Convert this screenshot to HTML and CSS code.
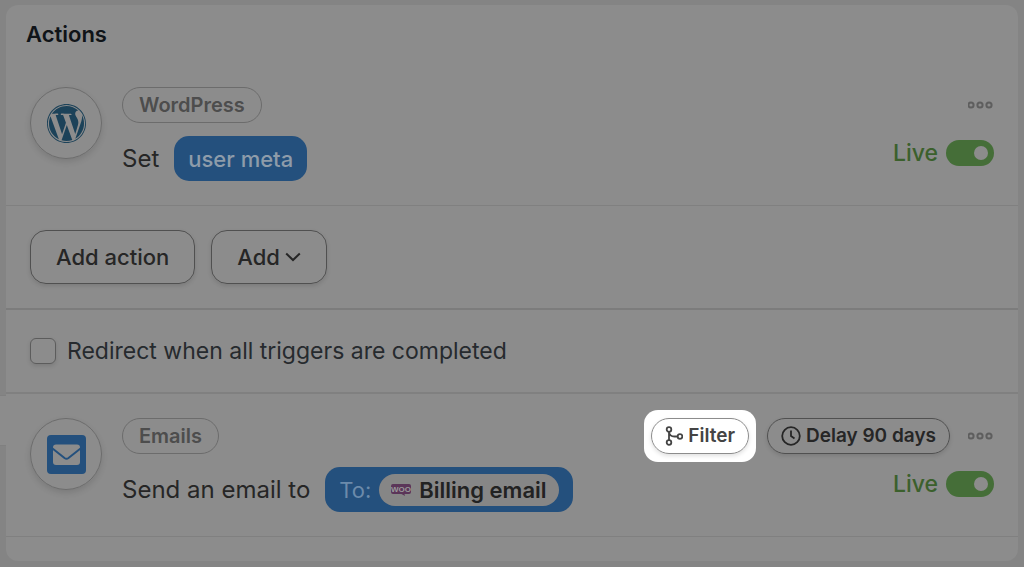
FILE: index.html
```html
<!DOCTYPE html>
<html lang="en">
<head>
<meta charset="utf-8">
<title>Actions</title>
<link rel="stylesheet" href="styles.css">
</head>
<body>
<main class="card">
  <h1 class="card-title">Actions</h1>

  <section class="action">
    <span class="badge">
      <svg class="badge-icon wordpress" viewBox="0 0 24 24" aria-hidden="true"><path d="M21.469 6.825c.84 1.537 1.318 3.3 1.318 5.175 0 3.979-2.156 7.456-5.363 9.325l3.295-9.527c.615-1.54.82-2.771.82-3.864 0-.405-.026-.78-.07-1.11m-7.981.105c.647-.03 1.232-.105 1.232-.105.582-.075.514-.93-.067-.899 0 0-1.755.135-2.88.135-1.064 0-2.85-.15-2.85-.15-.585-.03-.661.855-.075.885 0 0 .54.061 1.125.09l1.68 4.605-2.37 7.08L5.354 6.9c.649-.03 1.234-.1 1.234-.1.585-.075.516-.93-.065-.896 0 0-1.746.138-2.874.138-.2 0-.438-.008-.69-.015C4.911 3.15 8.235 1.215 12 1.215c2.809 0 5.365 1.072 7.286 2.833-.046-.003-.091-.009-.141-.009-1.06 0-1.812.923-1.812 1.914 0 .89.513 1.643 1.06 2.531.411.72.89 1.643.89 2.977 0 .915-.354 1.994-.821 3.479l-1.075 3.585-3.9-11.61.001.014zM12 22.784c-1.059 0-2.081-.153-3.048-.437l3.237-9.406 3.315 9.087c.024.053.05.101.078.149-1.12.393-2.325.609-3.582.609M1.211 12c0-1.564.336-3.05.935-4.39L7.29 21.709C3.694 19.96 1.212 16.271 1.211 12M12 0C5.385 0 0 5.385 0 12s5.385 12 12 12 12-5.385 12-12S18.615 0 12 0m0 23.459C5.692 23.459.541 18.308.541 12 .541 5.691 5.692.54 12 .54c6.309 0 11.46 5.151 11.46 11.46 0 6.308-5.151 11.459-11.46 11.459"/></svg>
    </span>
    <div class="details">
      <span class="source">WordPress</span>
      <div class="sentence">Set <button class="token" type="button">user meta</button></div>
    </div>
    <div class="controls">
      <div class="tools">
        <button class="more" type="button" aria-label="More options"><svg viewBox="1 0 26 8" aria-hidden="true"><circle cx="4" cy="4" r="2.6"/><circle cx="13" cy="4" r="2.6"/><circle cx="22" cy="4" r="2.6"/></svg></button>
      </div>
      <label class="live">Live <input class="switch" type="checkbox" role="switch" checked></label>
    </div>
  </section>

  <div class="buttons">
    <button class="button" type="button">Add action</button>
    <button class="button" type="button">Add <svg class="chevron" viewBox="0 0 16 10" aria-hidden="true"><path d="M1.2 1.500 8 8l6.800-6.500"/></svg></button>
  </div>

  <label class="redirect"><input class="check" type="checkbox">Redirect when all triggers are completed</label>

  <section class="action joined">
    <span class="badge">
      <svg class="badge-icon" viewBox="0 0 39 39" aria-hidden="true"><rect class="mail-box" width="39" height="39" rx="4"/><rect class="mail-paper" x="6" y="9.500" width="27" height="20.500" rx="3"/><path class="mail-fold" d="M5.500 13.500 17.500 23q2 1.500 4 0L33.500 13.500"/></svg>
    </span>
    <div class="details">
      <span class="source">Emails</span>
      <div class="sentence">Send an email to
        <button class="token token-field" type="button">To:
          <span class="value"><svg class="woo" viewBox="0 0 20 12" aria-hidden="true"><path d="M2 0h16q2 0 2 2v6q0 2-2 2h-4.500l.5 2L10.500 10H2Q0 10 0 8V2Q0 0 2 0z"/><text x="10" y="8" text-anchor="middle">WOO</text></svg>Billing email</span>
        </button>
      </div>
    </div>
    <div class="controls">
      <div class="tools">
        <span class="spotlight"><button class="tag tag-lit" type="button"><svg class="branch" viewBox="0 0 18 20" aria-hidden="true"><circle cx="4" cy="3.500" r="2.300"/><circle cx="4" cy="16.500" r="2.300"/><circle cx="15" cy="10.500" r="2.300"/><path d="M4 5.800v8.400M4 6q.5 4.500 5.500 4.500h3.200"/></svg>Filter</button></span>
        <button class="tag" type="button"><svg class="clock" viewBox="0 0 20 20" aria-hidden="true"><circle cx="10" cy="10" r="8.800"/><path d="M10 4.500V10l3.500 2.500"/></svg>Delay 90 days</button>
        <button class="more" type="button" aria-label="More options"><svg viewBox="1 0 26 8" aria-hidden="true"><circle cx="4" cy="4" r="2.6"/><circle cx="13" cy="4" r="2.6"/><circle cx="22" cy="4" r="2.6"/></svg></button>
      </div>
      <label class="live">Live <input class="switch" type="checkbox" role="switch" checked></label>
    </div>
  </section>
</main>
</body>
</html>
```

FILE: styles.css
```css
:root {
  --page: #848484;
  --surface: #8c8c8c;
  --line: #808080;
  --ink: #262626;
  --blue: #24507d;
  --green: #3b602c;
}

* { box-sizing: border-box; }

body {
  margin: 0;
  padding: 5px 6px;
  background: var(--page);
  color: var(--ink);
  font: 24px/28px Inter, "Liberation Sans", sans-serif;
}

button { font: inherit; color: inherit; cursor: pointer; }
svg { display: block; flex: none; }

.card {
  padding-bottom: 24px;
  background: var(--surface);
  border-radius: 12px;
}

.card-title {
  margin: 0;
  padding: 0 20px;
  color: #101418;
  font-size: 22px;
  font-weight: 600;
  line-height: 58px;
}

.action {
  position: relative;
  display: flex;
  gap: 20px;
  padding: 24px;
  border-bottom: 1px solid var(--line);
}

.joined::before {
  content: "";
  position: absolute;
  top: 1px;
  left: -6px;
  width: 6px;
  height: 49px;
  background: var(--surface);
  border: solid var(--line);
  border-width: 1px 0;
}

.badge {
  display: flex;
  flex: none;
  align-items: center;
  justify-content: center;
  width: 72px;
  height: 72px;
  border: 1px solid #6c6c6c;
  border-radius: 50%;
  box-shadow: 0 3px 6px rgb(0 0 0 / 12%);
}

.badge-icon { width: 39px; height: 39px; }
.wordpress { fill: #1c4259; }
.mail-box { fill: var(--blue); }
.mail-paper { fill: var(--surface); }
.mail-fold { fill: none; stroke: var(--blue); stroke-width: 2; }

.details {
  display: flex;
  flex: 1;
  flex-direction: column;
  align-items: flex-start;
  gap: 13px;
}

.source {
  padding: 0 16px;
  border: 1px solid #6c6c6c;
  border-radius: 18px;
  color: #4d4d4d;
  font-size: 20px;
  font-weight: 600;
  line-height: 34px;
}

.sentence {
  display: flex;
  align-items: center;
  gap: 15px;
  white-space: nowrap;
}

.token {
  display: flex;
  align-items: center;
  height: 45px;
  padding: 0 14px;
  border: 0;
  border-radius: 15px;
  background: var(--blue);
  color: #8e9caa;
  font-size: 22px;
  font-weight: 500;
}

.token-field { gap: 8px; color: #6c8bab; font-weight: 400; }

.value {
  display: flex;
  align-items: center;
  gap: 8px;
  height: 32px;
  padding: 0 12px;
  border-radius: 16px;
  background: #868686;
  color: #222;
  font-weight: 600;
}

.woo { width: 20px; height: 12px; fill: #5b3559; }
.woo text { fill: #999; font: 700 8px "Liberation Sans", sans-serif; }

.controls {
  display: flex;
  flex: none;
  flex-direction: column;
  align-items: flex-end;
  gap: 13px;
}

.tools { display: flex; align-items: center; gap: 18px; height: 36px; }

.more { padding: 0; border: 0; background: none; }
.more svg { width: 26px; height: 8px; fill: none; stroke: #5e5e5e; stroke-width: 2; }

.tag {
  display: flex;
  align-items: center;
  gap: 5px;
  height: 36px;
  padding: 0 13px;
  border: 1px solid #505050;
  border-radius: 18px;
  background: none;
  box-shadow: 0 2px 4px rgb(0 0 0 / 12%);
  font-size: 19px;
  font-weight: 600;
  white-space: nowrap;
}

.tag svg { height: 20px; fill: none; stroke: currentColor; stroke-width: 1.800; }
.branch { width: 18px; }
.clock { width: 20px; }

.spotlight { position: relative; }

.spotlight::before {
  content: "";
  position: absolute;
  inset: -8px -7px;
  border-radius: 14px;
  background: #fff;
}

.tag-lit { position: relative; border-color: #8c8c8c; color: #444; }

.live {
  display: flex;
  align-items: center;
  gap: 8px;
  height: 34px;
  color: var(--green);
  font-size: 23px;
  font-weight: 500;
}

.switch {
  display: flex;
  align-items: center;
  justify-content: flex-end;
  appearance: none;
  width: 48px;
  height: 26px;
  margin: 0;
  padding: 0 6px;
  border-radius: 13px;
  background: #456e38;
}

.switch::before {
  content: "";
  width: 14px;
  height: 14px;
  border-radius: 50%;
  background: var(--surface);
}

.switch:not(:checked) { justify-content: flex-start; background: #666; }

.buttons {
  display: flex;
  gap: 16px;
  padding: 24px;
  border-bottom: 2px solid #7c7c7c;
}

.button {
  display: flex;
  align-items: center;
  gap: 5px;
  height: 54px;
  padding: 0 25px;
  border: 1px solid #505050;
  border-radius: 16px;
  background: none;
  box-shadow: 0 2px 4px rgb(0 0 0 / 12%);
  font-size: 22px;
  font-weight: 500;
}

.chevron { width: 16px; height: 10px; fill: none; stroke: currentColor; stroke-width: 2; }

.redirect {
  display: flex;
  align-items: center;
  gap: 11px;
  padding: 27px 24px;
  border-bottom: 2px solid var(--line);
  color: #262a2e;
  font-size: 23px;
}

.check {
  appearance: none;
  width: 26px;
  height: 26px;
  margin: 0;
  border: 1px solid #5c5c5c;
  border-radius: 6px;
  box-shadow: 0 2px 4px rgb(0 0 0 / 12%);
}

.check:checked { background: var(--blue); }
```
